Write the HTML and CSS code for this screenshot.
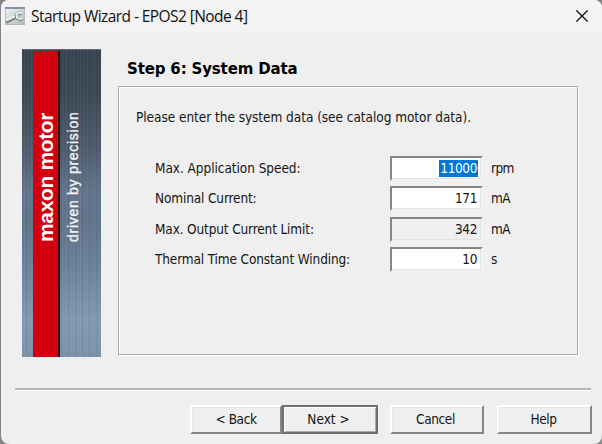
FILE: index.html
```html
<!DOCTYPE html>
<html lang="en">
<head>
<meta charset="utf-8">
<title>Startup Wizard - EPOS2 [Node 4]</title>
<link rel="stylesheet" href="styles.css">
</head>
<body>
<div class="window">
  <header class="titlebar">
    <svg class="app-icon" width="20" height="18" viewBox="0 0 20 18">
      <defs><linearGradient id="g" x1="0" y1="0" x2="1" y2="1"><stop offset="0" stop-color="#f4f4f4"/><stop offset="1" stop-color="#aeb8b8"/></linearGradient></defs>
      <rect x=".5" y=".5" width="19" height="17" fill="url(#g)" stroke="#b3b9bc"/>
      <rect x="0" y="0" width="20" height="2" fill="#7d97b0"/>
      <rect x="16" y="0" width="3" height="2" fill="#c57a6c"/>
      <path d="M1 15 11 9.500" stroke="#777f82" stroke-width="4"/>
      <path d="M1 13.500 11 8.500" stroke="#f1f4f4" stroke-width="2.500"/>
      <path d="M17 6.500 14 6 11.500 8 12 11 15 12.500 17.500 11.500" fill="none" stroke="#7d8789" stroke-width="3.400"/>
      <path d="M17 6 14 5.500 11.500 7.500 12 10.500 15 12 17.500 11" fill="none" stroke="#e9eeee" stroke-width="1.900"/>
    </svg>
    <h1 class="title">Startup Wizard - EPOS2 [Node 4]</h1>
    <svg class="close" width="12" height="12" viewBox="0 0 12 12"><path d="M.4 .4 11.600 11.600M11.600 .4 .4 11.600" stroke="#111" stroke-width="1.300"/></svg>
  </header>
  <main class="content">
    <aside class="banner">
      <div class="stripe"><span class="brand">maxon motor</span></div>
      <div class="metal"><span class="slogan">driven by precision</span></div>
    </aside>
    <section class="step">
      <h2 class="heading">Step 6: System Data</h2>
      <div class="group">
        <p class="intro">Please enter the system data (see catalog motor data).</p>
        <div class="fields">
          <span class="label speed">Max. Application Speed:</span><div class="field"><span class="selected">11000</span></div><span class="unit">rpm</span>
          <span class="label">Nominal Current:</span><div class="field">171</div><span class="unit">mA</span>
          <span class="label">Max. Output Current Limit:</span><div class="field readonly">342</div><span class="unit">mA</span>
          <span class="label">Thermal Time Constant Winding:</span><div class="field">10</div><span class="unit">s</span>
        </div>
      </div>
    </section>
  </main>
  <footer class="footer">
    <div class="button back">&lt; Back</div>
    <div class="button next">Next &gt;</div>
    <div class="button cancel">Cancel</div>
    <div class="button help">Help</div>
  </footer>
</div>
</body>
</html>
```
FILE: styles.css
```css
* { box-sizing: border-box; }
body { margin: 0; background: #858585; color: #151515; font: 13.5px/18px "DejaVu Sans Condensed", "DejaVu Sans", sans-serif; font-stretch: condensed; letter-spacing: -0.4px; }
h1, h2, p { margin: 0; }
.window { width: 601px; height: 444px; margin-left: 1px; background: #efefef; border-radius: 8px; overflow: hidden; white-space: nowrap; }
.titlebar { height: 33px; display: flex; align-items: center; padding: 0 14px 2px 4px; background: #f3f3f3; }
.title { margin-left: 6px; font: 400 15.5px/22px "Open Sans", sans-serif; letter-spacing: -0.57px; color: #111; }
.close { margin-left: auto; }
.content { height: 357px; margin-left: 14px; width: 576px; display: flex; padding: 16px 0 0 7px; border-bottom: 2px solid #b5b5b5; box-shadow: 0 1px #fff; }
.banner { width: 79px; height: 308px; display: flex; padding-left: 11px; border-top: 1px solid #626b72; background: repeating-linear-gradient(90deg, #ffffff00 0 2px, #ffffff0c 2px 3px, #0000000c 4px 5px, #ffffff08 6px 7px), linear-gradient(#374450 0, #3b4855 14%, #4d5c6d 32%, #63758e 47%, #60748b 56%, #6a7f98 69%, #8299b2 88%, #7c92aa 100%); }
.stripe { width: 27px; margin-top: 1px; background: #d5000f; border-right: 2px solid #281014; }
.brand, .slogan { display: block; writing-mode: vertical-rl; transform: rotate(180deg); font-family: "Liberation Sans", sans-serif; color: #fff; }
.brand { width: 25px; height: 191px; font-size: 21px; line-height: 25px; font-weight: 700; letter-spacing: -0.35px; }
.slogan { width: 27px; height: 192px; font-size: 14px; line-height: 27px; letter-spacing: 0.72px; color: #f2f5f8; -webkit-text-stroke: 0.35px #f2f5f8; }
.step { margin-left: 17px; width: 460px; }
.heading { height: 37px; padding: 10px 0 0 9px; font-family: "DejaVu Sans", sans-serif; font-stretch: normal; font-size: 15px; line-height: 20px; font-weight: 700; letter-spacing: -0.15px; color: #000; }
.group { height: 269px; padding: 21px 0 0 17px; border: 1px solid #a9a9a9; box-shadow: 1px 1px #fff, inset 1px 1px #fff; }
.intro { letter-spacing: -0.04px; }
.fields { display: grid; grid-template-columns: 235px 93px 60px; grid-template-rows: 30px 31px 30px 25px; padding: 30px 0 0 19px; }
.label, .unit { line-height: 25px; }
.label { letter-spacing: -0.14px; }
.speed { letter-spacing: -0.05px; }
.unit { padding-left: 8px; letter-spacing: -0.6px; }
.field { height: 25px; padding: 1px 4px 0 0; text-align: right; line-height: 19px; background: #fff; border: 2px solid; border-color: #858585 #f2f2f2 #f2f2f2 #858585; box-shadow: inset -1px -1px #e4e4e4; }
.readonly { background: #efefef; }
.selected { display: inline-block; height: 17px; line-height: 17px; padding: 0 1px; margin-right: -1px; background: #0078d7; color: #fff; }
.footer { display: flex; padding: 15px 0 0 189px; }
.button { width: 94px; height: 29px; text-align: center; line-height: 24px; border: 2px solid; border-color: #fff #858585 #858585 #fff; box-shadow: inset 1px 1px #e8e8e8; }
.back { width: 92px; }
.next { width: 96px; letter-spacing: 0; padding-right: 3px; border-color: #707070; box-shadow: inset 1px 1px #fff, inset -1px -1px #aaa; }
.cancel { margin-left: 12px; padding-right: 3px; }
.help { margin-left: 13px; width: 95px; padding-right: 2px; }
```
